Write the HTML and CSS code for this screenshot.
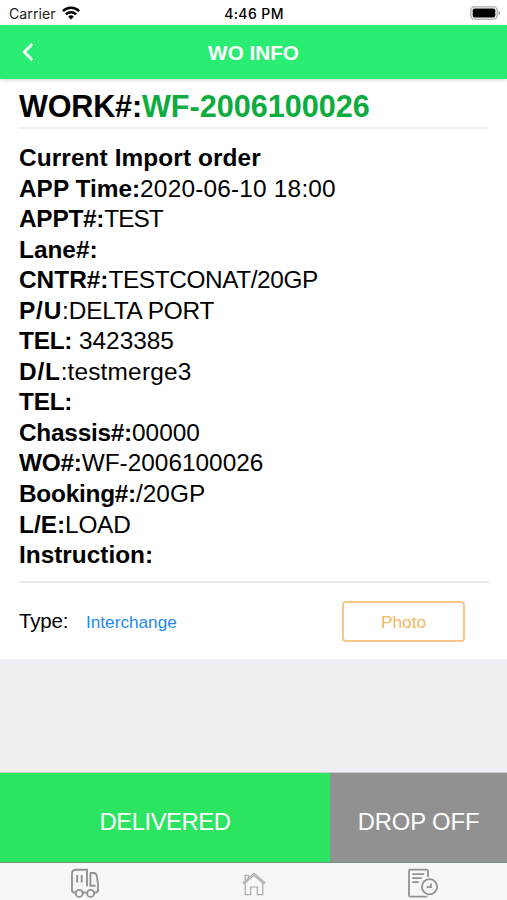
FILE: index.html
```html
<!DOCTYPE html>
<html lang="en">
<head>
<meta charset="utf-8">
<title>WO INFO</title>
<link rel="stylesheet" href="styles.css">
</head>
<body>
<div class="status">
  <div class="carrier"><span>Carrier</span>
    <svg width="18" height="14" viewBox="0 0 18 14"><g fill="none" stroke="#000" stroke-width="2.5"><path d="M.9 5.1a11.5 11.5 0 0 1 16.2 0"/><path d="M3.9 8.3a7.2 7.2 0 0 1 10.2 0"/></g><path d="M9 13.6 6.1 10.7a4.1 4.1 0 0 1 5.8 0Z"/></svg>
  </div>
  <time>4:46 PM</time>
  <svg class="battery" width="31" height="14" viewBox="0 0 31 14"><rect x=".8" y=".8" width="26.4" height="12.4" rx="3.6" fill="#fff" stroke="#aaa" stroke-width="1.3"/><rect x="2.7" y="2.5" width="22.6" height="9" rx="1.8"/><path d="M28.6 4.7c2.2.8 2.2 3.8 0 4.6Z" fill="#aaa"/></svg>
</div>
<header class="nav">
  <svg width="12" height="20" viewBox="0 0 12 20"><path d="M10.3 2 2.2 10l8.1 8" fill="none" stroke="#fff" stroke-width="2.7"/></svg>
  <h1>WO INFO</h1>
</header>
<main class="content">
  <h2 class="work"><b>WORK#:</b><span>WF-2006100026</span></h2>
  <div class="details">
    <div class="heading"><b>Current Import order</b></div>
    <div><b>APP Time:</b><span class="wide">2020-06-10 18:00</span></div>
    <div><b class="snug">APPT#:</b><span class="tight">TEST</span></div>
    <div><b>Lane#:</b></div>
    <div><b>CNTR#:</b><span class="narrow">TESTCONAT/20GP</span></div>
    <div><b class="loose">P/U</b>:<span class="snug">DELTA PORT</span></div>
    <div><b class="snug">TEL:</b> 3423385</div>
    <div><b class="loose">D/L</b>:<span class="wide">testmerge3</span></div>
    <div><b class="snug">TEL:</b></div>
    <div><b class="snug">Chassis#:</b>00000</div>
    <div><b class="snug">WO#:</b>WF-2006100026</div>
    <div><b class="snug">Booking#:</b>/20GP</div>
    <div><b>L/E:</b><span class="snug">LOAD</span></div>
    <div><b>Instruction:</b></div>
  </div>
  <div class="type-row">
    <span class="label">Type:</span><a class="link">Interchange</a><button class="photo">Photo</button>
  </div>
</main>
<div class="actions"><button class="delivered">DELIVERED</button><button class="drop">DROP OFF</button></div>
<nav class="tabs">
  <div><svg width="30" height="32" viewBox="0 0 30 32" fill="none" stroke="#929292" stroke-width="1.9"><path d="M5.5 25.5H4.2Q2 25.5 2 23V7q0-4.2 4.2-4.2H17v16.4M20 6h3.2q3.3 0 3.8 4l1 7v6q0 2.5-2.5 2.5h-1.2M12.8 25.5h3.4"/><path d="M25.6 18.8h-5.2V6M7.2 8v7.5M11.7 8v7.5"/><circle cx="9.2" cy="26.4" r="3.5"/><circle cx="20.6" cy="26.4" r="3.5"/></svg></div>
  <div><svg width="24" height="32" viewBox="0 0 24 32" fill="none" stroke="#aaa" stroke-width="1.2"><path d="m1.2 15.6 10.8-9.3 10.8 9.3-1 1.1L12 8.4l-9.8 8.3Z"/><path d="M3.2 16v11.7h5.5V20h6.6v7.7h5.5V16M3.2 13.7V8.4h3.2v2.4"/></svg></div>
  <div><svg width="32" height="32" viewBox="0 0 32 32" fill="none" stroke="#929292" stroke-width="1.8"><path d="M21 10V4.2q0-1.5-1.5-1.5h-16Q2 2.7 2 4.2v24q0 1.5 1.5 1.5h15.2q1.3 0 2-1.3"/><path d="M5.2 7.2h12M5.2 11.2h9.5M5.2 15.2h6.5"/><circle cx="22.5" cy="19.8" r="7.6"/><circle cx="22.5" cy="19.8" r="9.5" stroke="#f7f7f7" stroke-width="1"/><path d="M24 16.4v3.8h-4.3"/></svg></div>
</nav>
</body>
</html>
```

FILE: styles.css
```css
* { box-sizing: border-box; }
body {
  margin: 0;
  width: 507px;
  height: 900px;
  display: flex;
  flex-direction: column;
  overflow: hidden;
  background: #efeef3;
  color: #000;
  font-family: "Liberation Sans", Arial, sans-serif;
}
button { font-family: inherit; border: 0; padding: 0; margin: 0; }
svg { display: block; }
.status {
  height: 25px;
  flex: none;
  display: grid;
  grid-template-columns: 1fr auto 1fr;
  align-items: center;
  padding: 2px 6px 0 9px;
  background: #fff;
  font: 14.2px Inter, sans-serif;
}
.carrier { display: flex; align-items: center; gap: 6px; color: #222; }
.carrier svg { margin-top: -2px; }
.status time { font-weight: 500; font-size: 14px; letter-spacing: .4px; margin-left: -2px; }
.battery { justify-self: end; margin-top: -2px; }
.nav {
  position: relative;
  height: 54px;
  flex: none;
  display: grid;
  grid-template-columns: 12px 1fr 12px;
  align-items: center;
  padding: 0 22px;
  background: #2aed73;
  box-shadow: 0 1px 4px rgba(0, 0, 0, .18);
}
.nav h1 { margin: 1px 0 0; text-align: center; color: #fff; font-size: 20.7px; line-height: 24px; }
.content { height: 580px; flex: none; background: #fff; padding: 0 18px 0 19px; }
.work {
  margin: 0;
  height: 50px;
  padding-top: 9px;
  border-bottom: 2px solid #efefef;
  font-size: 30.6px;
  line-height: 36px;
  white-space: nowrap;
}
.work b { letter-spacing: -.2px; }
.work span { color: #0cac41; }
.details {
  height: 454px;
  padding-top: 14px;
  border-bottom: 2px solid #e9e9ec;
  font-size: 24.4px;
  line-height: 30.54px;
  white-space: nowrap;
}
.heading { letter-spacing: .1px; }
.snug { letter-spacing: -.25px; }
.narrow { letter-spacing: -.4px; }
.tight { letter-spacing: -1px; }
.wide { letter-spacing: .2px; }
.loose { letter-spacing: .8px; }
.type-row { display: flex; align-items: center; height: 76px; }
.label { width: 67px; font-size: 20.5px; letter-spacing: -.2px; }
.link { font-size: 17.2px; color: #2489ef; margin-top: 2px; }
.photo {
  width: 123px;
  height: 41px;
  margin-left: auto;
  margin-right: 24px;
  border: 2px solid #f5c889;
  border-radius: 4px;
  background: #fff;
  color: #f3b760;
  font-size: 17.3px;
  padding-top: 2px;
}
.actions {
  margin-top: auto;
  height: 91px;
  flex: none;
  display: grid;
  grid-template-columns: 330px 1fr;
  border-top: 1px solid #c7d0cb;
  border-bottom: 1px solid #769380;
}
.actions button { color: #fff; font-size: 23.8px; padding-top: 8px; }
.delivered { background: #2be460; letter-spacing: -.45px; }
.drop { background: #919191; letter-spacing: -.1px; }
.tabs {
  height: 37px;
  flex: none;
  display: grid;
  grid-template-columns: repeat(3, 1fr);
  justify-items: center;
  padding-top: 4px;
  background: #f7f7f7;
}
```
